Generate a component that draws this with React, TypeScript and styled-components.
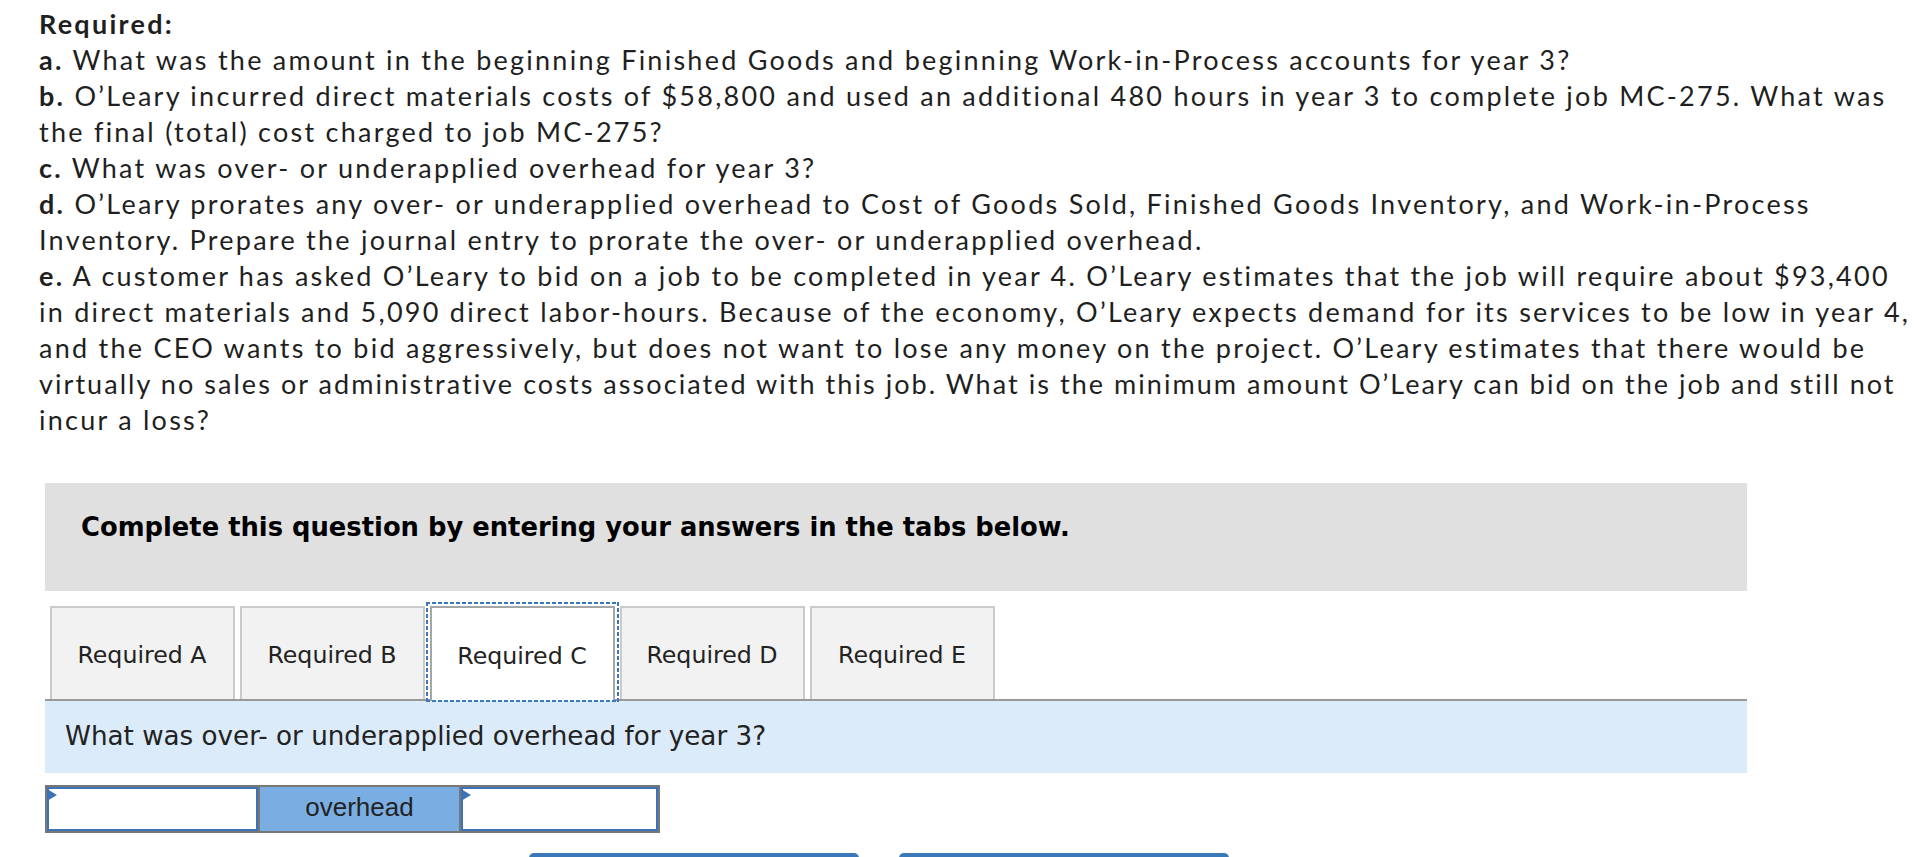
import React from "react";
import styled, { createGlobalStyle } from "styled-components";

const GlobalStyle = createGlobalStyle`
  html, body {
    margin: 0;
    padding: 0;
    background: #ffffff;
    overflow: hidden;
  }
  body {
    font-family: "DejaVu Sans", Verdana, sans-serif;
  }
`;

const Page = styled.main`
  display: flex;
  flex-direction: column;
  align-items: flex-start;
`;

const Prompt = styled.section`
  padding: 6px 0 0 39px;
  font-family: "Lato", "Liberation Sans", sans-serif;
  font-size: 27px;
  line-height: 36px;
  letter-spacing: 2.25px;
  color: #1f1f1f;
  white-space: nowrap;
`;

const Item = styled.p`
  margin: 0;
`;

const Label = styled.strong`
  font-weight: 700;
`;

const Tight = styled.span`
  letter-spacing: 2.05px;
`;

const Card = styled.section`
  margin: 45px 0 0 45px;
  width: 1702px;
  display: flex;
  flex-direction: column;
  align-items: stretch;
`;

const Banner = styled.div`
  background: #e0e0e0;
  padding: 29px 36px 49px;
  font-family: "DejaVu Sans", Verdana, sans-serif;
  font-weight: 700;
  font-size: 25.8px;
  line-height: 30px;
  color: #000000;
`;

const TabBar = styled.div`
  margin-top: 15px;
  padding-left: 4.5px;
  display: flex;
  align-items: flex-start;
  gap: 5px;
  border-bottom: 2px solid #999999;
`;

const dash = "#3a78c0";

const Tab = styled.button<{ $active?: boolean }>`
  position: relative;
  box-sizing: border-box;
  width: 185px;
  height: ${(p) => (p.$active ? 95 : 93)}px;
  margin: 0 0 ${(p) => (p.$active ? -2 : 0)}px;
  padding: 3px 0 0;
  display: flex;
  align-items: center;
  justify-content: center;
  border: 2px solid ${(p) => (p.$active ? "#a6a6a6" : "#cacaca")};
  border-bottom: none;
  background: ${(p) => (p.$active ? "#ffffff" : "#f2f2f2")};
  font-family: "DejaVu Sans", Verdana, sans-serif;
  font-size: 23.7px;
  color: #222222;
  cursor: pointer;

  &::after {
    content: "";
    display: ${(p) => (p.$active ? "block" : "none")};
    position: absolute;
    top: -6px;
    left: -6px;
    right: -6px;
    bottom: -1px;
    pointer-events: none;
    background:
      linear-gradient(90deg, ${dash} 4px, transparent 0) top left / 6px 2px repeat-x,
      linear-gradient(90deg, ${dash} 4px, transparent 0) bottom left / 6px 2px repeat-x,
      linear-gradient(180deg, ${dash} 4px, transparent 0) top left / 2px 6px repeat-y,
      linear-gradient(180deg, ${dash} 4px, transparent 0) top right / 2px 6px repeat-y;
  }
`;

const Panel = styled.div`
  background: #dbebf9;
  padding: 20px 20px 22px;
  font-family: "DejaVu Sans", Verdana, sans-serif;
  font-size: 26.2px;
  line-height: 30px;
  color: #222222;
`;

const AnswerRow = styled.div`
  margin-top: 12px;
  align-self: flex-start;
  display: flex;
  gap: 2px;
  border: 2px solid #777777;
  background: #777777;
`;

const InputCell = styled.div<{ $w: number }>`
  position: relative;
  box-sizing: border-box;
  width: ${(p) => p.$w}px;
  height: 44px;
  background: #ffffff;
  border: 2px solid #3a73b8;

  &::before {
    content: "";
    position: absolute;
    top: 0;
    left: -2px;
    width: 0;
    height: 0;
    border-left: 10px solid #3a73b8;
    border-top: 6.5px solid transparent;
    border-bottom: 6.5px solid transparent;
  }
`;

const LabelCell = styled.div<{ $w: number }>`
  box-sizing: border-box;
  width: ${(p) => p.$w}px;
  height: 44px;
  padding-bottom: 3px;
  display: flex;
  align-items: center;
  justify-content: center;
  background: #7aaee3;
  font-family: "Liberation Sans", Arial, sans-serif;
  font-size: 26px;
  color: #222222;
`;

const Actions = styled.div`
  margin-top: 20px;
  padding-left: 484px;
  display: flex;
  gap: 40px;
`;

const NavButton = styled.button`
  width: 330px;
  height: 44px;
  border: none;
  border-radius: 5px;
  background: #3a78b8;
  cursor: pointer;
`;

const tabs = ["Required A", "Required B", "Required C", "Required D", "Required E"];

export default function App() {
  return (
    <>
      <GlobalStyle />
      <Page>
        <Prompt>
          <Item>
            <Label>Required:</Label>
          </Item>
          <Item>
            <Label>a.</Label> What was the amount in the beginning Finished Goods and beginning Work-in-Process accounts for year 3?
          </Item>
          <Item>
            <Label>b.</Label> O’Leary incurred direct materials costs of $58,800 and used an additional 480 hours in year 3 to complete job MC-275. What was
            <br />
            the final (total) cost charged to job MC-275?
          </Item>
          <Item>
            <Label>c.</Label> What was over- or underapplied overhead for year 3?
          </Item>
          <Item>
            <Label>d.</Label> O’Leary prorates any over- or underapplied overhead to Cost of Goods Sold, Finished Goods Inventory, and Work-in-Process
            <br />
            Inventory. Prepare the journal entry to prorate the over- or underapplied overhead.
          </Item>
          <Item>
            <Label>e.</Label> A customer has asked O’Leary to bid on a job to be completed in year 4. O’Leary estimates that the job will require about $93,400
            <br />
            in direct materials and 5,090 direct labor-hours. Because of the economy, O’Leary expects demand for its services to be low in year 4,
            <br />
            and the CEO wants to bid aggressively, but does not want to lose any money on the project. O’Leary estimates that there would be
            <br />
            <Tight>
              virtually no sales or administrative costs associated with this job. What is the minimum amount O’Leary can bid on the job and still not
            </Tight>
            <br />
            incur a loss?
          </Item>
        </Prompt>

        <Card>
          <Banner>Complete this question by entering your answers in the tabs below.</Banner>
          <TabBar>
            {tabs.map((t) => (
              <Tab key={t} $active={t === "Required C"}>
                {t}
              </Tab>
            ))}
          </TabBar>
          <Panel>What was over- or underapplied overhead for year 3?</Panel>
          <AnswerRow>
            <InputCell $w={211} />
            <LabelCell $w={199}>overhead</LabelCell>
            <InputCell $w={197} />
          </AnswerRow>
          <Actions>
            <NavButton aria-label="Required B" />
            <NavButton aria-label="Required D" />
          </Actions>
        </Card>
      </Page>
    </>
  );
}
